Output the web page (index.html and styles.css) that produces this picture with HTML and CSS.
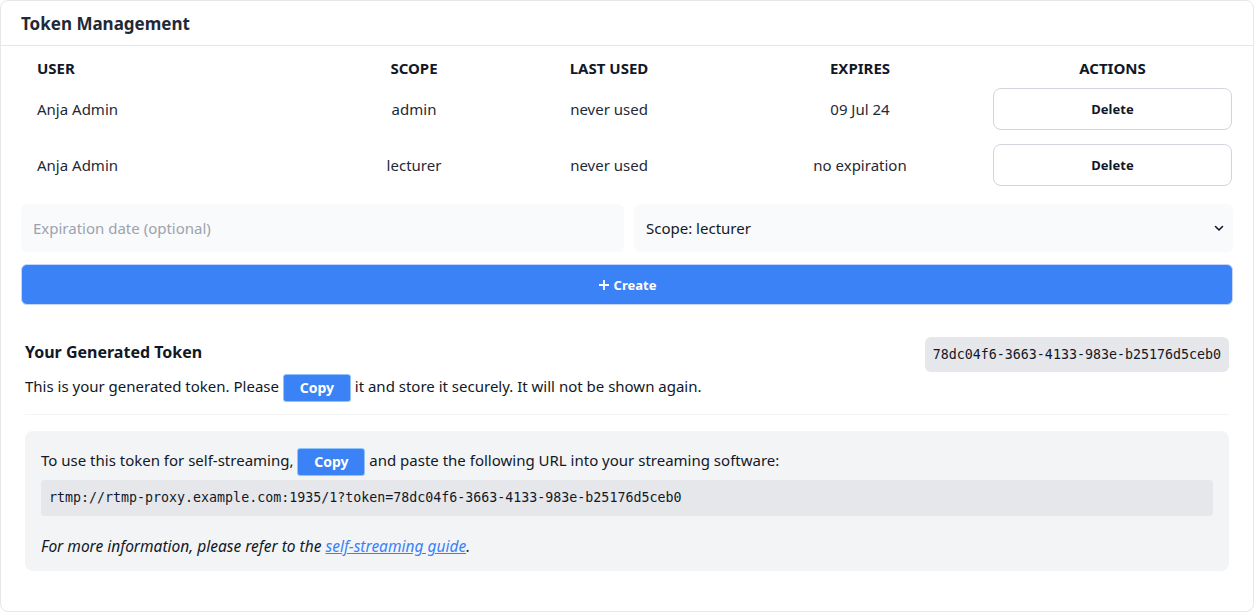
FILE: index.html
```html
<!DOCTYPE html>
<html>
<head>
<meta charset="utf-8">
<link rel="stylesheet" href="styles.css">
</head>
<body>
<div class="card">
  <div class="card-header">Token Management</div>
  <div class="card-body">
    <div class="table">
      <div class="row head">
        <div class="c1">USER</div>
        <div class="c2">SCOPE</div>
        <div class="c3">LAST USED</div>
        <div class="c4">EXPIRES</div>
        <div class="c5">ACTIONS</div>
      </div>
      <div class="row">
        <div class="c1">Anja Admin</div>
        <div class="c2">admin</div>
        <div class="c3">never used</div>
        <div class="c4">09 Jul 24</div>
        <div class="c5"><button class="btn-delete">Delete</button></div>
      </div>
      <div class="row">
        <div class="c1">Anja Admin</div>
        <div class="c2">lecturer</div>
        <div class="c3">never used</div>
        <div class="c4">no expiration</div>
        <div class="c5"><button class="btn-delete">Delete</button></div>
      </div>
    </div>
    <div class="form-row">
      <div class="field placeholder">Expiration date (optional)</div>
      <div class="field select">
        <span>Scope: lecturer</span>
        <svg width="12" height="12" viewBox="0 0 12 12"><path d="M2.5 4.5 L6 8 L9.5 4.5" fill="none" stroke="#111827" stroke-width="1.6" stroke-linecap="round" stroke-linejoin="round"/></svg>
      </div>
    </div>
    <button class="btn-create">
      <svg width="12" height="12" viewBox="0 0 12 12"><path d="M6 1 V11 M1 6 H11" stroke="#fff" stroke-width="1.8"/></svg>
      Create
    </button>
    <div class="token-section">
      <div class="token-top">
        <div class="token-title">Your Generated Token</div>
        <code class="token-badge">78dc04f6-3663-4133-983e-b25176d5ceb0</code>
      </div>
      <p class="token-text">This is your generated token. Please <button class="btn-copy">Copy</button> it and store it securely. It will not be shown again.</p>
      <div class="divider"></div>
      <div class="info-box">
        <p class="info-line">To use this token for self-streaming, <button class="btn-copy">Copy</button> and paste the following URL into your streaming software:</p>
        <div class="url-code">rtmp://rtmp-proxy.example.com:1935/1?token=78dc04f6-3663-4133-983e-b25176d5ceb0</div>
        <p class="info-more">For more information, please refer to the <a href="#">self-streaming guide</a>.</p>
      </div>
    </div>
  </div>
</div>
</body>
</html>
```

FILE: styles.css
```css
* { box-sizing: border-box; }
html, body { margin: 0; padding: 0; background: #ffffff; }
body {
  font-family: "Noto Sans", "Open Sans", sans-serif;
  color: #111827;
  font-size: 15px;
}
.card {
  width: 1254px;
  height: 612px;
  border: 1px solid #e5e7eb;
  border-radius: 8px;
  background: #fff;
}
.card-header {
  height: 45px;
  padding: 0 20px;
  display: flex;
  align-items: center;
  font-weight: 700;
  font-size: 17px;
  color: #1f2937;
  border-bottom: 1px solid #e5e7eb;
}
.card-body {
  padding: 0 20px;
}
.table { display: flex; flex-direction: column; }
.row {
  display: grid;
  grid-template-columns: 317px 152px 238px 264px 240px;
  align-items: center;
  height: 56px;
}
.row.head {
  height: 35px;
  padding-top: 9px;
  font-weight: 700;
  font-size: 15px;
  color: #111827;
}
.row > div { text-align: center; }
.row > .c1 { text-align: left; padding-left: 16px; }
.row > .c5 { padding-left: 1px; }
.row:not(.head) { color: #1f2937; }
.btn-delete {
  display: block;
  width: 239px;
  height: 42px;
  border: 1px solid #d1d5db;
  border-radius: 8px;
  background: #fff;
  font-family: inherit;
  font-weight: 700;
  font-size: 13px;
  color: #111827;
}
.form-row {
  display: flex;
  gap: 10px;
  margin-top: 11px;
}
.field {
  flex: 1;
  height: 48px;
  background: #f9fafb;
  border-radius: 6px;
  display: flex;
  align-items: center;
  padding: 0 12px;
  font-size: 15px;
}
.placeholder { color: #9ca3af; }
.select { justify-content: space-between; color: #111827; padding-right: 8px; }
.btn-create {
  width: 100%;
  margin-top: 12px;
  height: 41px;
  background: #3b82f6;
  border: 1px solid #c7d2fe;
  border-radius: 6px;
  color: #fff;
  font-family: inherit;
  font-weight: 700;
  font-size: 13px;
  display: flex;
  align-items: center;
  justify-content: center;
  gap: 4px;
}
.token-section { padding: 0 4px; margin-top: 32px; }
.token-top {
  display: flex;
  justify-content: space-between;
  align-items: flex-start;
}
.token-title {
  font-weight: 700;
  font-size: 16px;
  margin-top: 4px;
  color: #111827;
}
.token-badge {
  display: block;
  background: #e5e7eb;
  border-radius: 6px;
  padding: 0 8px;
  height: 35px;
  line-height: 35px;
  font-family: "DejaVu Sans Mono", monospace;
  font-size: 13.3px;
  color: #111827;
}
.token-text {
  margin: 0;
  line-height: 28px;
  font-size: 15px;
}
.btn-copy {
  height: 28px;
  width: 68px;
  background: #3b82f6;
  border: 1px solid #93c5fd;
  border-radius: 3px;
  color: #fff;
  font-family: inherit;
  font-weight: 700;
  font-size: 14px;
  vertical-align: middle;
  padding: 0;
}
.divider {
  height: 1px;
  background: #f3f4f6;
  margin-top: 12px;
}
.info-box {
  margin-top: 16px;
  background: #f3f4f6;
  border-radius: 8px;
  padding: 15px 16px 13px;
}
.info-line { margin: 0; line-height: 28px; }
.url-code {
  margin-top: 4px;
  background: #e5e7eb;
  border-radius: 4px;
  height: 36px;
  line-height: 36px;
  padding: 0 8px;
  font-family: "DejaVu Sans Mono", monospace;
  font-size: 13.3px;
  color: #111827;
}
.info-more {
  margin: 18px 0 0;
  font-style: italic;
  font-size: 15.5px;
  line-height: 24px;
}
.info-more a { color: #3b82f6; text-decoration: underline; }
```
